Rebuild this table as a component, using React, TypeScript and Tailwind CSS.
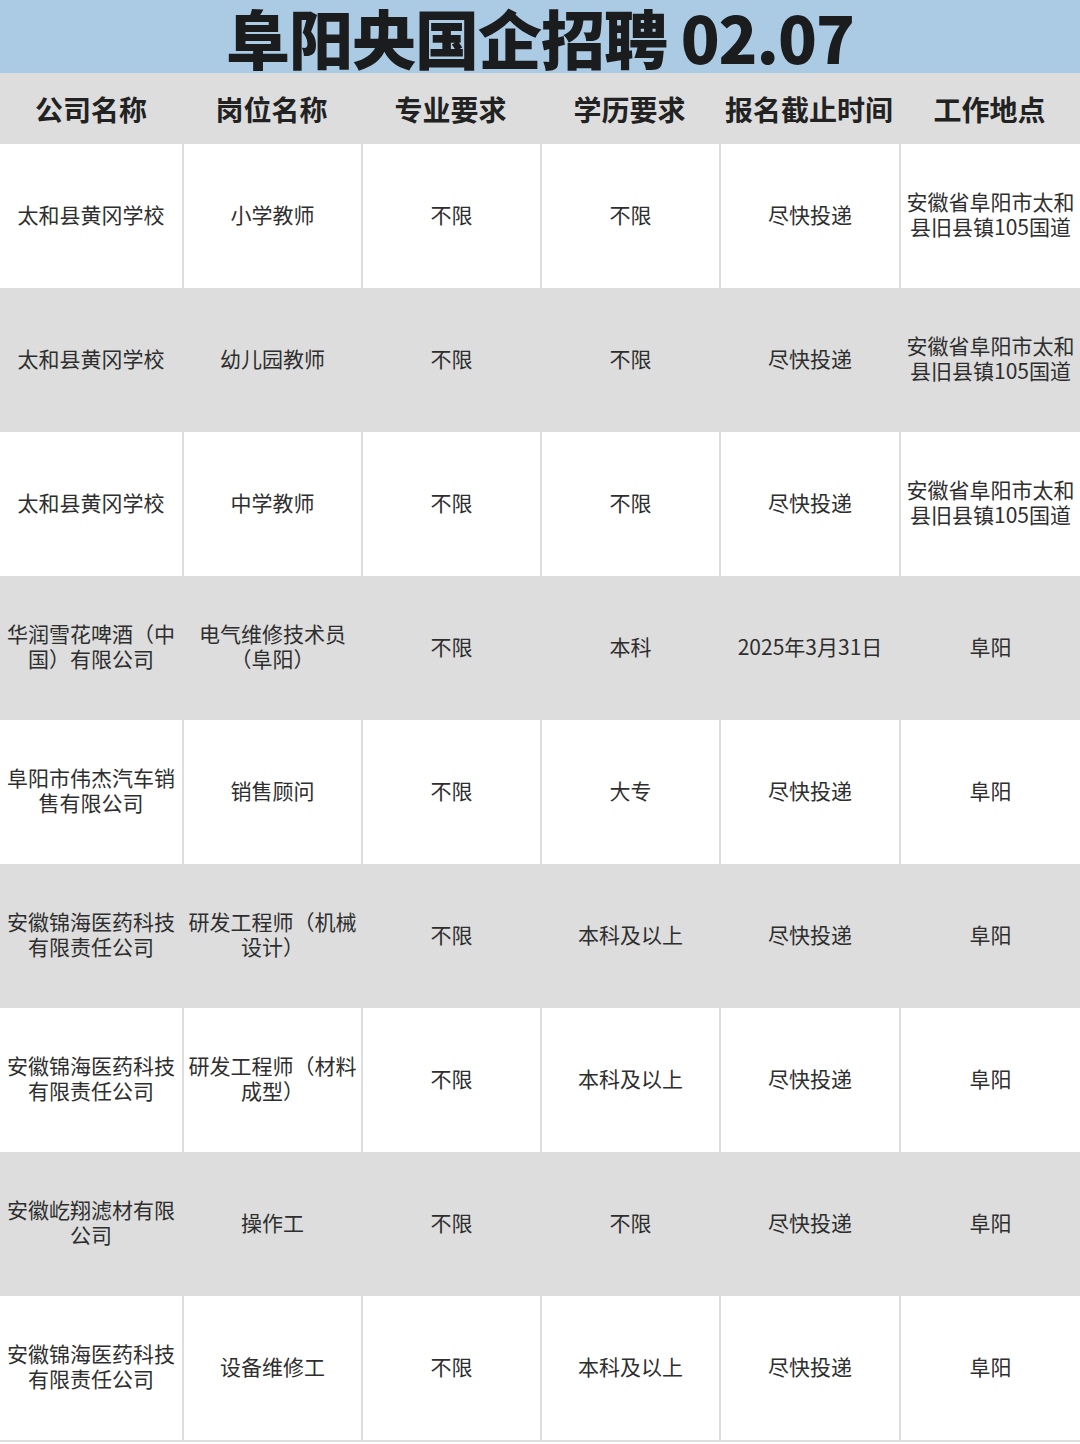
const FONT = "font-['Noto_Sans_CJK_SC','Noto_Sans',sans-serif]";

const headers = ['公司名称', '岗位名称', '专业要求', '学历要求', '报名截止时间', '工作地点'];

const rows: string[][] = [
  ['太和县黄冈学校', '小学教师', '不限', '不限', '尽快投递', '安徽省阜阳市太和县旧县镇105国道'],
  ['太和县黄冈学校', '幼儿园教师', '不限', '不限', '尽快投递', '安徽省阜阳市太和县旧县镇105国道'],
  ['太和县黄冈学校', '中学教师', '不限', '不限', '尽快投递', '安徽省阜阳市太和县旧县镇105国道'],
  ['华润雪花啤酒（中国）有限公司', '电气维修技术员（阜阳）', '不限', '本科', '2025年3月31日', '阜阳'],
  ['阜阳市伟杰汽车销售有限公司', '销售顾问', '不限', '大专', '尽快投递', '阜阳'],
  ['安徽锦海医药科技有限责任公司', '研发工程师（机械设计）', '不限', '本科及以上', '尽快投递', '阜阳'],
  ['安徽锦海医药科技有限责任公司', '研发工程师（材料成型）', '不限', '本科及以上', '尽快投递', '阜阳'],
  ['安徽屹翔滤材有限公司', '操作工', '不限', '不限', '尽快投递', '阜阳'],
  ['安徽锦海医药科技有限责任公司', '设备维修工', '不限', '本科及以上', '尽快投递', '阜阳'],
];

// column widths read off the reference's divider lines
const COLS = 'grid grid-cols-[182px_179px_179px_179px_180px_181px]';

export default function App() {
  return (
    <div className={`${FONT} w-[1080px] h-[1444px] bg-white overflow-hidden`}>
      <div className="h-[73px] bg-[#abcbe5] flex justify-center">
        <h1 className="text-[64px] leading-[72px] font-black text-[#1b1c1e] tracking-[-1px]">
          阜阳央国企招聘 02.07
        </h1>
      </div>

      <div className={`h-[71px] bg-[#dddddd] ${COLS}`}>
        {headers.map((h) => (
          <div key={h} className="flex items-center justify-center text-[28px] font-bold text-[#222222]">
            {h}
          </div>
        ))}
      </div>

      {rows.map((row, i) => (
        <div key={i} className={`h-[144px] ${COLS} ${i % 2 === 1 ? 'bg-[#dddddd]' : 'bg-white'}`}>
          {row.map((cell, j) => (
            <div
              key={j}
              className={`flex items-center justify-center px-[4px] pb-[4px] text-center text-[21px] leading-[25px] text-[#2e2e2e] ${
                j > 0 ? 'border-l-2 border-[#dddddd]' : ''
              }`}
            >
              {cell}
            </div>
          ))}
        </div>
      ))}
      <div className="h-[2px] bg-[#dddddd]" />
    </div>
  );
}
